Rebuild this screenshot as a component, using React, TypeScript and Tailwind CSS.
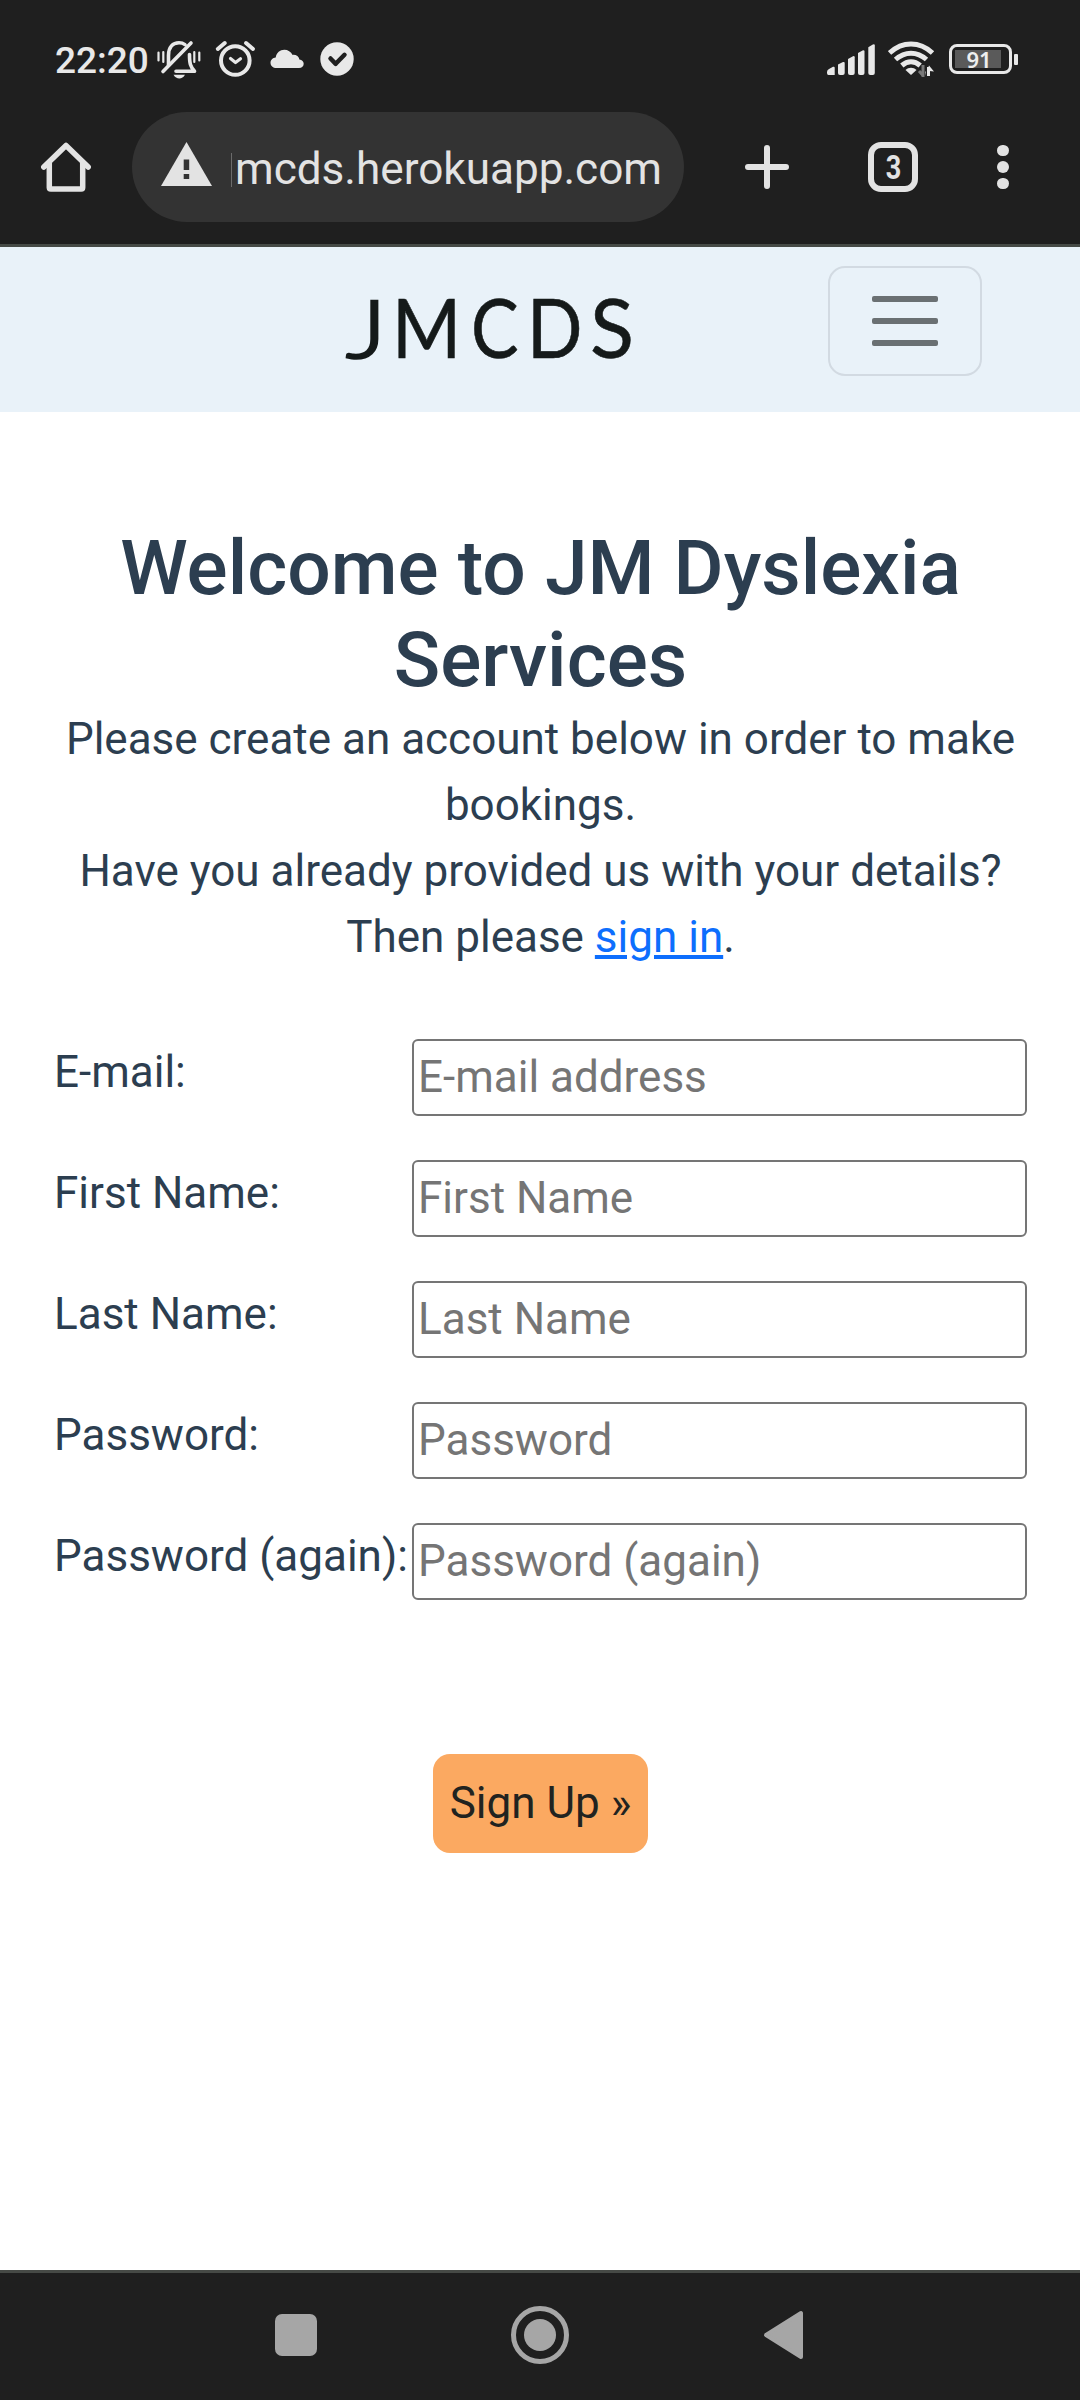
import React from "react";

const fields = [
  { id: "email", label: "E-mail:", placeholder: "E-mail address", type: "email" },
  { id: "first", label: "First Name:", placeholder: "First Name", type: "text" },
  { id: "last", label: "Last Name:", placeholder: "Last Name", type: "text" },
  { id: "password1", label: "Password:", placeholder: "Password", type: "password" },
  { id: "password2", label: "Password (again):", placeholder: "Password (again)", type: "password" },
];

function MutedBell() {
  return (
    <svg className="ml-[8px] h-[40px] w-[48px]" viewBox="155 39 48 40" fill="none" stroke="#e8e8e8" strokeWidth="3.6" strokeLinecap="round" strokeLinejoin="round">
      <path d="M168.500 65V55.500C168.500 47 173 42.800 179 42.800c2.300 0 4.300.6 6 1.800" />
      <path d="M189.500 54.500c0 9 .8 12 5 16.800H176" />
      <path d="M163 71.500L191 43" />
      <path d="M158.500 52.500v8M163.300 52v10M194.300 52v10M199.300 52.500v8" strokeWidth="2.200" />
      <path d="M173.500 74.800h11.500c-1.500 2.600-3.400 3.700-5.700 3.700s-4.300-1.100-5.800-3.700z" fill="#e8e8e8" stroke="none" />
    </svg>
  );
}

function AlarmClock() {
  return (
    <svg className="ml-[11px] h-[40px] w-[42px]" viewBox="214 39 42 40" fill="none" stroke="#e8e8e8" strokeWidth="4" strokeLinecap="round" strokeLinejoin="round">
      <circle cx="235.300" cy="60.500" r="14.300" />
      <path d="M217.800 49l7-6M253 49l-7-6" />
      <path d="M230.500 58.500l5 4 5-3.800" strokeWidth="3.200" />
    </svg>
  );
}

function Cloud() {
  return (
    <svg className="ml-[14px] h-[20px] w-[34px]" viewBox="270 48 34 20" fill="#e8e8e8">
      <path d="M276.500 67c-3.500 0-6-2.200-6-5.300 0-3 2.200-5 5.200-5.300C276.500 51.800 280 48.700 284.300 48.700c3.600 0 6.700 2 8.300 5.200 3.600-.3 6.300 1.600 6.800 4.700 2.700.3 4.300 2 4.300 4.200 0 2.500-1.800 4.200-4.700 4.200z" />
    </svg>
  );
}

function CheckBadge() {
  return (
    <svg className="ml-[16px] h-[34px] w-[34px]" viewBox="0 0 34 34">
      <circle cx="17" cy="17" r="16.700" fill="#e8e8e8" />
      <path d="M10.500 16.500l5.200 5.300 8.800-9" fill="none" stroke="#1f1f1f" strokeWidth="4.500" strokeLinecap="round" strokeLinejoin="round" />
    </svg>
  );
}

function Signal() {
  return (
    <svg className="h-[32px] w-[50px]" viewBox="826 43 50 32" fill="#e8e8e8">
      <path d="M827 72q0-2 2-3l4-2.200q1.700-.5 1.700 1V75h-6.200Q827 75 827 73z" />
      <path d="M838 64.500l5-2.500q1.700-.5 1.700 1V73q0 2-2 2h-2.700q-2 0-2-2z" />
      <path d="M848 59l5-2.800q1.700-.5 1.700 1V73q0 2-2 2h-2.700q-2 0-2-2z" />
      <path d="M858 53l4.500-2.500q2-.7 2 1V73q0 2-2 2H860q-2 0-2-2z" />
      <path d="M868.300 47.200l4.500-2.700q2-.7 2 1V73q0 2-2 2h-2.500q-2 0-2-2z" />
    </svg>
  );
}

function Wifi() {
  return (
    <svg className="ml-[12px] h-[36px] w-[48px]" viewBox="888 42 48 36" fill="none" stroke="#e8e8e8" strokeWidth="5">
      <path d="M889.500 54c13-12 30-12 43 0" />
      <path d="M895.500 60.500c9.500-8.500 21.500-8.500 31 0" />
      <path d="M901.800 66.500c5.800-5 12.600-5 18.400 0" />
      <path d="M905.500 71c3.300-3 7.700-3 11 0l-5.500 5z" fill="#e8e8e8" stroke="none" />
      <path d="M923 66v12M919 72l4 4.500" stroke="#777" strokeWidth="3" />
      <path d="M928.500 77v-9" strokeWidth="3" />
      <path d="M925.700 72.500h-.7V77M927 71.800l2-5.300 5 6z" fill="#e8e8e8" stroke="none" />
    </svg>
  );
}

function Battery() {
  return (
    <div className="ml-[13px] flex items-center gap-[2px]">
      <div className="flex h-[30px] w-[63px] items-center justify-center rounded-[8px] border-[3px] border-[#e8e8e8] p-[3px]">
        <div className="relative h-[18px] w-[51px]">
          <div className="h-full w-[46px] bg-[#5a5a5a]" />
          <span className="absolute inset-0 flex items-center justify-center pr-[3px] font-['Noto_Sans'] text-[22px] font-semibold leading-none text-[#eeeeee]">91</span>
        </div>
      </div>
      <div className="h-[11px] w-[4px] rounded-[1px] bg-[#e8e8e8]" />
    </div>
  );
}

function StatusBar() {
  return (
    <div className="flex h-[100px] items-center justify-between pl-[55px] pr-[62px] pt-[18px]">
      <div className="flex items-center">
        <span className="w-[92px] whitespace-nowrap pt-[2px] text-[37px] font-medium leading-none text-[#e8e8e8]">22:20</span>
        <MutedBell />
        <AlarmClock />
        <Cloud />
        <CheckBadge />
      </div>
      <div className="flex items-center">
        <Signal />
        <Wifi />
        <Battery />
      </div>
    </div>
  );
}

function Toolbar() {
  return (
    <div className="flex h-[144px] items-start pt-[12px]">
      <div className="flex h-[110px] w-full items-center">
        <svg className="ml-[40px] h-[52px] w-[52px]" viewBox="40 141 52 52" fill="none" stroke="#e3e3e3" strokeWidth="5.500" strokeLinecap="round" strokeLinejoin="round">
          <path d="M43.800 167L66 145.500 88.200 167" />
          <path d="M49.300 163v24.500q0 1.500 1.500 1.500h30.400q1.500 0 1.500-1.500V163" />
        </svg>
        <div className="ml-[40px] flex h-[110px] w-[552px] items-center rounded-full bg-[#333333] pl-[29px]">
          <svg className="mb-[6px] h-[44px] w-[51px]" viewBox="0 0 51 44">
            <path d="M25.500 0L51 44H0z" fill="#e3e3e3" />
            <path d="M22.700 17.500h5.500v10.500h-5.500zM22.700 32h5.500v5h-5.500z" fill="#333333" />
          </svg>
          <span className="ml-[19px] mt-[5px] h-[34px] w-px bg-[#6b6b6b]" />
          <span className="ml-[3px] whitespace-nowrap pt-[3px] text-[44.100px] leading-[52px] text-[#e3e3e3]">mcds.herokuapp.com</span>
        </div>
        <svg className="ml-[60px] h-[46px] w-[46px]" viewBox="0 0 46 46" stroke="#e3e3e3" strokeWidth="6" strokeLinecap="round">
          <path d="M23 4v38M4 23h38" />
        </svg>
        <div className="ml-[78px] flex h-[50px] w-[50px] items-center justify-center rounded-[13px] border-[6px] border-[#e3e3e3]">
          <span className="scale-x-[0.820] text-[33px] font-bold leading-none text-[#e3e3e3]">3</span>
        </div>
        <div className="ml-[79px] flex flex-col gap-[5px]">
          <span className="h-[11.500px] w-[11.500px] rounded-full bg-[#e3e3e3]" />
          <span className="h-[11.500px] w-[11.500px] rounded-full bg-[#e3e3e3]" />
          <span className="h-[11.500px] w-[11.500px] rounded-full bg-[#e3e3e3]" />
        </div>
      </div>
    </div>
  );
}

function SiteNav() {
  return (
    <nav className="flex h-[165px] items-start justify-between bg-[#e9f2f9] pl-[346px] pr-[98px] pt-[19px]">
      <span className="mt-[13px] flex whitespace-nowrap font-['Lato'] text-[81px] leading-[96px] text-[#151a1a] [-webkit-text-stroke:0.600px_#151a1a]">
        <span className="w-[46px] origin-left scale-x-[1.200] font-light [-webkit-text-stroke:2.600px_#151a1a]">J</span>
        <span className="w-[79px] origin-left scale-x-[0.920]">M</span>
        <span className="w-[56px] origin-left scale-x-[0.880]">C</span>
        <span className="w-[63px] origin-left scale-x-[0.900]">D</span>
        <span>S</span>
      </span>
      <button className="flex h-[110px] w-[154px] flex-col items-center gap-[16px] rounded-[17px] border-2 border-[#d2dae2] pt-[28px]">
        <span className="h-[6px] w-[66px] rounded-[2px] bg-[#6a7073]" />
        <span className="h-[6px] w-[66px] rounded-[2px] bg-[#6a7073]" />
        <span className="h-[6px] w-[66px] rounded-[2px] bg-[#6a7073]" />
      </button>
    </nav>
  );
}

export default function App() {
  return (
    <div className="flex h-[2400px] w-[1080px] flex-col overflow-hidden bg-white font-['Roboto',sans-serif] text-[#2c3e50]">
      <header className="border-b-[3px] border-[#464a46] bg-[#1f1f1f]">
        <StatusBar />
        <Toolbar />
      </header>
      <SiteNav />
      <main className="flex flex-1 flex-col items-center pt-[110px]">
        <h1 className="pl-px text-center text-[76.700px] font-medium leading-[92px]">
          Welcome to JM Dyslexia
          <br />
          Services
        </h1>
        <p className="pl-px text-center text-[44px] leading-[66px]">
          Please create an account below in order to make
          <br />
          bookings.
          <br />
          Have you already provided us with your details?
          <br />
          Then please <a href="#" className="text-[#0d6efd] underline">sign in</a>.
        </p>
        <form className="mt-[69px] flex w-full flex-col items-center">
          <div className="flex w-full flex-col gap-[44px] pl-[54px] pr-[53px]">
            {fields.map((f) => (
              <div key={f.id} className="flex h-[77px] items-start justify-between">
                <label htmlFor={f.id} className="whitespace-nowrap text-[44px] leading-[66px]">{f.label}</label>
                <input
                  id={f.id}
                  type={f.type}
                  placeholder={f.placeholder}
                  className="h-[77px] w-[615px] rounded-[6px] border-2 border-[#757575] bg-white pb-[2px] pl-[4px] text-[44px] placeholder:text-[#757575]"
                />
              </div>
            ))}
          </div>
          <button type="button" className="mt-[154px] h-[99px] w-[215px] rounded-[17px] bg-[#fba961] pb-[2px] pl-px text-[44px] text-[#212320]">
            Sign Up »
          </button>
        </form>
      </main>
      <footer className="flex h-[130px] items-center border-t-[3px] border-[#464a46] bg-[#1f1f1f] pb-[4px]">
        <div className="ml-[275px] h-[42px] w-[42px] rounded-[7px] bg-[#a6a6a6]" />
        <div className="ml-[194px] flex h-[58px] w-[58px] items-center justify-center rounded-full border-[5px] border-[#a6a6a6]">
          <div className="h-[32px] w-[32px] rounded-full bg-[#a6a6a6]" />
        </div>
        <svg className="ml-[194px] h-[50px] w-[41px]" viewBox="0 0 41 50">
          <path d="M3 25L38 3v44z" fill="#a6a6a6" stroke="#a6a6a6" strokeWidth="4" strokeLinejoin="round" />
        </svg>
      </footer>
    </div>
  );
}
